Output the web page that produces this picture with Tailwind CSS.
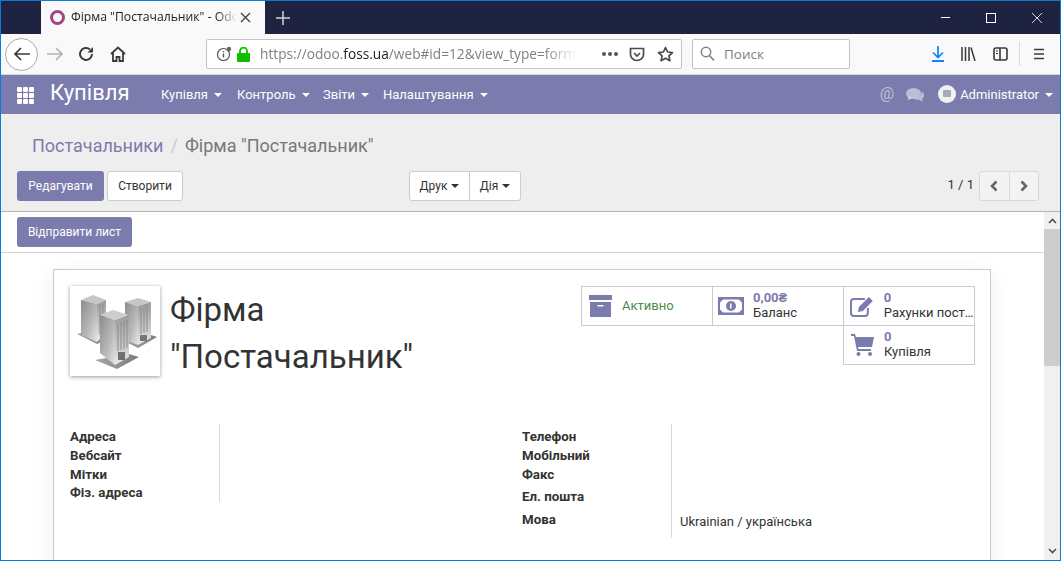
<!DOCTYPE html>
<html lang="uk">
<head>
<meta charset="UTF-8">
<title>Фірма "Постачальник" - Odoo</title>
<script src="https://cdn.jsdelivr.net/npm/@tailwindcss/browser@4"></script>
</head>
<body class="bg-white">
<div class="w-[1061px] h-[561px] overflow-hidden flex flex-col border border-[#0a7cd6] font-['Roboto',sans-serif] text-[13px] text-[#333333]">

  <!-- title bar -->
  <div class="h-[33px] shrink-0 bg-[#1e2342] flex items-stretch">
    <div class="w-[40px]"></div>
    <div class="w-[224px] bg-[#f9f9fa] flex items-center pl-[9px]">
      <span class="w-[15px] h-[15px] rounded-full border-[3px] border-[#a24689]"></span>
      <span class="ml-[6px] w-[166px] overflow-hidden whitespace-nowrap text-[12.2px] text-[#222222] font-['Open_Sans',sans-serif] [mask-image:linear-gradient(90deg,#000_88%,transparent)]">Фірма "Постачальник" - Odoo</span>
      <svg class="ml-[3px]" width="11" height="11" viewBox="0 0 11 11"><path d="M1 1l9 9M10 1l-9 9" stroke="#444" stroke-width="1.4"/></svg>
    </div>
    <div class="w-[36px] flex items-center justify-center">
      <svg width="14" height="14" viewBox="0 0 14 14"><path d="M7 0v14M0 7h14" stroke="#d0d2da" stroke-width="1.5"/></svg>
    </div>
    <div class="flex-1"></div>
    <div class="flex items-center">
      <div class="w-[46px] flex justify-center"><span class="w-[9px] h-px bg-white"></span></div>
      <div class="w-[46px] flex justify-center"><span class="w-[10px] h-[10px] border border-white"></span></div>
      <div class="w-[46px] flex justify-center"><svg width="10" height="10" viewBox="0 0 10 10"><path d="M0 0l10 10M10 0L0 10" stroke="#fff" stroke-width="0.8"/></svg></div>
    </div>
  </div>

  <!-- browser toolbar -->
  <div class="h-[41px] shrink-0 bg-[#f9f9fa] border-b border-[#d8d8da] flex items-center relative">
    <div class="ml-[4px] w-[33px] h-[33px] rounded-full border border-[#a8a8a8] bg-white flex items-center justify-center">
      <svg width="18" height="16" viewBox="0 0 18 16" fill="none"><path d="M17 8H2M8 2L2 8l6 6" stroke="#3a3a3a" stroke-width="1.7"/></svg>
    </div>
    <svg class="ml-[8px]" width="18" height="16" viewBox="0 0 18 16" fill="none"><path d="M1 8h15M10 2l6 6-6 6" stroke="#b4b4b4" stroke-width="1.7"/></svg>
    <svg class="ml-[14px]" width="16" height="16" viewBox="0 0 16 16" fill="none"><path d="M14 8a6 6 0 1 1-2-4.500" stroke="#3a3a3a" stroke-width="2"/><path d="M15 1v5.500h-5.500z" fill="#3a3a3a"/></svg>
    <svg class="ml-[16px]" width="16" height="16" viewBox="0 0 16 16" fill="none"><path d="M1 8l7-6.500L15 8M3 7v8h3.500v-4h3v4H13V7" stroke="#3a3a3a" stroke-width="1.800"/></svg>

    <div class="ml-[80px] w-[476px] h-[30px] bg-white border border-[#c4c4c6] rounded-[2px] flex items-center pl-[9px] text-[14px] text-[#7e7e7e] font-['Open_Sans',sans-serif]">
      <svg width="16" height="16" viewBox="0 0 16 16" fill="none"><circle cx="7.500" cy="8.500" r="6" stroke="#555" stroke-width="1.200"/><path d="M7.500 7.500v4M7.500 5v1.300" stroke="#555" stroke-width="1.400"/><circle cx="13" cy="3" r="2.200" fill="#666"/></svg>
      <svg class="ml-[5px]" width="13" height="15" viewBox="0 0 13 15"><rect x="0" y="6" width="13" height="9" rx="1" fill="#12bc00"/><path d="M3 7V4a3.500 3.500 0 0 1 7 0v3" fill="none" stroke="#12bc00" stroke-width="1.800"/></svg>
      <span class="ml-[10px] w-[316px] overflow-hidden whitespace-nowrap [mask-image:linear-gradient(90deg,#000_90%,transparent)] text-[13.7px]">https://odoo.<span class="text-[#222222]">foss.ua</span>/web#id=12&amp;view_type=form&amp;model=res.partner</span>
      <div class="ml-[26px] flex gap-[2px]"><span class="w-[4px] h-[4px] rounded-full bg-[#555]"></span><span class="w-[4px] h-[4px] rounded-full bg-[#555]"></span><span class="w-[4px] h-[4px] rounded-full bg-[#555]"></span></div>
      <svg class="ml-[11px]" width="16" height="15" viewBox="0 0 16 15" fill="none"><path d="M1.500 1.500h13v6a6.500 6 0 0 1-13 0z" stroke="#4a4a4a" stroke-width="1.700"/><path d="M5 6l3 3 3-3" stroke="#4a4a4a" stroke-width="1.700"/></svg>
      <svg class="ml-[12px]" width="17" height="16" viewBox="0 0 17 16" fill="none"><path d="M8.500 1.500l2.100 4.500 4.900.6-3.600 3.300 1 4.800-4.400-2.500-4.400 2.500 1-4.800L1.500 6.600l4.900-.6z" stroke="#4a4a4a" stroke-width="1.700" stroke-linejoin="round"/></svg>
    </div>

    <div class="ml-[10px] w-[158px] h-[30px] bg-white border border-[#c4c4c6] rounded-[2px] flex items-center pl-[7px] text-[13.500px] text-[#7e7e7e] font-['Open_Sans',sans-serif]">
      <svg width="15" height="16" viewBox="0 0 15 16" fill="none"><circle cx="6" cy="6" r="4.700" stroke="#808080" stroke-width="1.500"/><path d="M9.500 9.500l4.500 5" stroke="#808080" stroke-width="1.700"/></svg>
      <span class="ml-[9px]">Поиск</span>
    </div>

    <svg class="ml-[81px]" width="14" height="16" viewBox="0 0 14 16" fill="none"><path d="M7 0v11M2 6.500l5 5 5-5" stroke="#0a84ff" stroke-width="1.700"/><path d="M1 15h12" stroke="#0a84ff" stroke-width="2"/></svg>
    <svg class="ml-[16px]" width="15" height="14" viewBox="0 0 15 14" fill="none"><path d="M1 0v14M4.500 0v14M8 0v14M10 .5l4 13.500" stroke="#3a3a3a" stroke-width="1.500"/></svg>
    <svg class="ml-[17px]" width="15" height="14" viewBox="0 0 15 14" fill="none"><rect x="1" y="1" width="13" height="12" rx="2" stroke="#3a3a3a" stroke-width="1.600"/><path d="M7 1v12" stroke="#3a3a3a" stroke-width="1.600"/><path d="M3 4h2M3 6.500h2" stroke="#3a3a3a"/></svg>
    <span class="ml-[11px] w-px h-[24px] bg-[#dcdcdc]"></span>
    <svg class="ml-[13px]" width="12" height="12" viewBox="0 0 12 12"><path d="M1 1.500h10M1 6h10M1 10.500h10" stroke="#3a3a3a" stroke-width="1.600"/></svg>
  </div>

  <!-- odoo nav -->
  <div class="h-[39px] shrink-0 bg-[#7c7bad] flex items-center text-white pt-px">
    <div class="ml-[16px] grid grid-cols-3 gap-[1px] w-[17px]">
      <span class="h-[5px] bg-white rounded-[1px]"></span><span class="h-[5px] bg-white rounded-[1px]"></span><span class="h-[5px] bg-white rounded-[1px]"></span>
      <span class="h-[5px] bg-white rounded-[1px]"></span><span class="h-[5px] bg-white rounded-[1px]"></span><span class="h-[5px] bg-white rounded-[1px]"></span>
      <span class="h-[5px] bg-white rounded-[1px]"></span><span class="h-[5px] bg-white rounded-[1px]"></span><span class="h-[5px] bg-white rounded-[1px]"></span>
    </div>
    <span class="ml-[16px] text-[22px] leading-none -mt-[5px] w-[111px]">Купівля</span>
    <span class="flex items-center w-[76px]">Купівля<i class="ml-[6px] border-x-[4px] border-x-transparent border-t-[4px] border-t-white"></i></span>
    <span class="flex items-center w-[86px]">Контроль<i class="ml-[6px] border-x-[4px] border-x-transparent border-t-[4px] border-t-white"></i></span>
    <span class="flex items-center w-[60px]">Звіти<i class="ml-[6px] border-x-[4px] border-x-transparent border-t-[4px] border-t-white"></i></span>
    <span class="flex items-center">Налаштування<i class="ml-[6px] border-x-[4px] border-x-transparent border-t-[4px] border-t-white"></i></span>
    <span class="ml-auto text-[16px] leading-none text-white/50 -mt-[2px]">@</span>
    <svg class="ml-[12px]" width="18" height="15" viewBox="0 0 18 15"><ellipse cx="7.500" cy="5.500" rx="7.500" ry="5.500" fill="#fff" fill-opacity=".5"/><path d="M2.500 8.500L1.500 12.500l4.500-2.500z" fill="#fff" fill-opacity=".5"/><path d="M15.500 3.500c2 1 2.500 2.500 2.500 3.800 0 1.500-.8 2.800-2 3.600l.8 2.800-3.500-2c-2 .3-4-.2-5.300-1.200 4.500.2 8-2.500 7.500-7z" fill="#fff" fill-opacity=".5"/></svg>
    <span class="ml-[14px] w-[18px] h-[18px] rounded-full bg-[#f2f2f2] flex items-center justify-center -mt-[3px]"><span class="w-[8px] h-[7px] rounded-[1px] bg-[#a9a9bb]"></span></span>
    <span class="ml-[4px]">Administrator</span>
    <i class="ml-[6px] mr-[7px] border-x-[4px] border-x-transparent border-t-[4px] border-t-white"></i>
  </div>

  <!-- control panel -->
  <div class="h-[98px] shrink-0 bg-[#efeeef] border-b border-[#b5b5b5] pl-[16px] pr-[21px]">
    <div class="h-[57px] pl-[15px] pt-[20px] text-[18px] leading-[24px] whitespace-nowrap">
      <span class="text-[#7c7bad]">Постачальники</span><span class="text-[#c8c8c8] mx-[7px]">/</span><span class="text-[#777777]">Фірма "Постачальник"</span>
    </div>
    <div class="flex items-start text-[12px]">
      <button class="w-[87px] h-[30px] bg-[#7c7bad] text-white rounded-[3px]">Редагувати</button>
      <button class="ml-[3px] w-[76px] h-[30px] bg-white border border-[#cccccc] rounded-[3px]">Створити</button>
      <div class="ml-[226px] flex h-[30px] bg-white border border-[#cccccc] rounded-[3px]">
        <span class="w-[60px] flex items-center justify-center border-r border-[#cccccc]">Друк<i class="ml-[4px] border-x-[4px] border-x-transparent border-t-[4px] border-t-[#333333]"></i></span>
        <span class="w-[50px] flex items-center justify-center">Дія<i class="ml-[4px] border-x-[4px] border-x-transparent border-t-[4px] border-t-[#333333]"></i></span>
      </div>
      <span class="ml-auto h-[30px] leading-[28px] text-[13px]">1 / 1</span>
      <div class="ml-[5px] flex h-[30px] w-[60px] bg-[#f3f3f3] border border-[#d8d8d8] rounded-[3px]">
        <span class="flex-1 flex items-center justify-center border-r border-[#d8d8d8]"><svg width="8" height="12" viewBox="0 0 8 12" fill="none"><path d="M6.500 1.500L2 6l4.500 4.500" stroke="#666" stroke-width="2.600"/></svg></span>
        <span class="flex-1 flex items-center justify-center"><svg width="8" height="12" viewBox="0 0 8 12" fill="none"><path d="M1.500 1.500L6 6l-4.500 4.500" stroke="#666" stroke-width="2.600"/></svg></span>
      </div>
    </div>
  </div>

  <!-- content + scrollbar -->
  <div class="flex-1 min-h-0 flex">
    <div class="flex-1 min-w-0 overflow-hidden">
      <div class="h-[41px] border-b border-[#cfcfd4] pl-[16px] pt-[5px]">
        <button class="w-[115px] h-[30px] bg-[#7c7bad] text-white text-[12px] rounded-[3px]">Відправити лист</button>
      </div>
      <div class="ml-[52px] w-[938px] h-[400px] mt-[16px] bg-white border border-[#c9c9d1] shadow-[0_5px_20px_rgba(0,0,0,0.08)] pt-[16px] pl-[16px] pr-[15px]">
        <div class="flex items-start h-[138px]">
          <div class="w-[90px] h-[90px] shrink-0 bg-white shadow-[0_1px_4px_rgba(0,0,0,0.4)]">
            <svg width="90" height="90" viewBox="0 0 90 90">
              <defs>
                <linearGradient id="lface" x1="0" y1="0" x2="1" y2="1"><stop offset="0" stop-color="#8c8c8c"/><stop offset="0.6" stop-color="#b9b9b9"/><stop offset="1" stop-color="#e6e6e6"/></linearGradient>
                <linearGradient id="rface" x1="0" y1="0" x2="0" y2="1"><stop offset="0" stop-color="#9a9a9a"/><stop offset="0.7" stop-color="#cfcfcf"/><stop offset="1" stop-color="#ececec"/></linearGradient>
                <linearGradient id="floor" x1="0" x2="1"><stop offset="0" stop-color="#a8a8a8"/><stop offset="1" stop-color="#7c7c7c"/></linearGradient>
              </defs>
              <!-- left block -->
              <path d="M7 48l20 10 14-6-16-9z" fill="url(#floor)"/>
              <path d="M11 14l12-5 13 5-9 4z" fill="#c6c6c6"/>
              <path d="M11 14l16 4v38l-16-7z" fill="url(#lface)"/>
              <path d="M27 18l9-4v33l-9 9z" fill="url(#rface)"/>
              <path d="M30 19v30M33 18v28" stroke="#8d8d8d"/>
              <!-- right block -->
              <path d="M52 54l16 8 19-11-12-4z" fill="url(#floor)"/>
              <path d="M55 16l13-4 13 4-13 4z" fill="#c6c6c6"/>
              <path d="M55 16l13 4v39l-13-5z" fill="url(#lface)"/>
              <path d="M68 20l13-4v36l-13 7z" fill="url(#rface)"/>
              <path d="M71 21v27M74 20v27M77 19v27" stroke="#8d8d8d"/>
              <rect x="70" y="49" width="7" height="6" fill="#777"/>
              <!-- front block -->
              <path d="M25 74l22 9 22-12-10-3z" fill="url(#floor)"/>
              <path d="M30 29l13-5 16 5-14 5z" fill="#cdcdcd"/>
              <path d="M30 29l15 5v45l-15-12z" fill="url(#lface)"/>
              <path d="M45 34l14-5v42l-14 8z" fill="url(#rface)"/>
              <path d="M48 37v28M51 36v28M54 35v28M57 34v28" stroke="#8d8d8d"/>
              <rect x="48" y="66" width="7" height="8" fill="#6f6f6f"/>
            </svg>
          </div>
          <div class="ml-[10px] w-[260px] text-[33px] leading-[47px] text-[#333333] whitespace-nowrap">Фірма<br>"Постачальник"</div>
          <div class="ml-auto grid grid-cols-[132px_131px_131px] w-[394px] text-[13px] leading-[15px]">
            <div class="h-[40px] border border-[#c9c9d1] flex items-center">
              <svg class="ml-[7px]" width="23" height="22" viewBox="0 0 23 22" fill="#7c7bad"><rect width="23" height="5"/><path d="M1 7h21v15H1zM8.500 10v1.500h6V10z" fill-rule="evenodd"/></svg>
              <span class="ml-[10px] -mt-[2px] text-[#4d8a4e]">Активно</span>
            </div>
            <div class="h-[40px] border-y border-r border-[#c9c9d1] flex items-center">
              <svg class="ml-[5px]" width="26" height="18" viewBox="0 0 26 18"><rect width="26" height="18" fill="#7c7bad"/><path d="M5 2.500h16l3 3v7l-3 3H5l-3-3v-7z" fill="#fff"/><circle cx="13" cy="9" r="5" fill="#7c7bad"/><path d="M12 6.500h1.500v5H12z" fill="#fff"/></svg>
              <div class="ml-[9px] -mt-[3px]"><div class="font-bold text-[#7c7bad]">0,00₴</div><div>Баланс</div></div>
            </div>
            <div class="h-[40px] border-y border-r border-[#c9c9d1] flex items-center">
              <svg class="ml-[6px]" width="25" height="21" viewBox="0 0 25 21" fill="none"><path d="M15 3H4a3 3 0 0 0-3 3v11a3 3 0 0 0 3 3h11a3 3 0 0 0 3-3v-5" stroke="#7c7bad" stroke-width="2"/><path d="M8 16l1-5L19 1l4 4-10 10z" fill="#7c7bad"/></svg>
              <div class="ml-[9px] -mt-[3px] min-w-0"><div class="font-bold text-[#7c7bad]">0</div><div class="whitespace-nowrap overflow-hidden text-ellipsis w-[91px]">Рахунки постачальника</div></div>
            </div>
            <div class="col-start-3 -ml-px h-[39px] border-x border-b border-[#c9c9d1] flex items-center">
              <svg class="ml-[7px]" width="23" height="22" viewBox="0 0 23 22" fill="#7c7bad"><path d="M0 0h4l1 3h18l-2 10H7l.5 2H20v2H6L3 2H0z"/><circle cx="7.500" cy="20" r="2"/><circle cx="19" cy="20" r="2"/></svg>
              <div class="ml-[10px] -mt-[3px]"><div class="font-bold text-[#7c7bad]">0</div><div>Купівля</div></div>
            </div>
          </div>
        </div>

        <div class="flex items-start">
          <div class="w-[150px] h-[78px] border-r border-[#d9d9d9] font-bold pt-[3px] leading-[19px] text-[13.3px]">
            <div>Адреса</div><div>Вебсайт</div><div>Мітки</div><div class="leading-[18px]">Фіз. адреса</div>
          </div>
          <div class="ml-[302px] w-[150px] h-[114px] border-r border-[#d9d9d9] font-bold pt-[3px] leading-[19px] text-[13.3px]">
            <div>Телефон</div><div>Мобільний</div><div>Факс</div><div class="mt-[3px]">Ел. пошта</div><div class="mt-[4px]">Мова</div>
          </div>
          <div class="ml-[8px] pt-[88px] leading-[19px]">Ukrainian / українська</div>
        </div>
      </div>
    </div>
    <div class="w-[16px] shrink-0 bg-[#f0f0f0] flex flex-col items-center">
      <svg class="mt-[6px]" width="9" height="6" viewBox="0 0 9 6" fill="none"><path d="M1 5l3.500-3.500L8 5" stroke="#505050" stroke-width="1.600"/></svg>
      <div class="mt-[5px] w-full h-[137px] bg-[#cdcdcd]"></div>
      <svg class="mt-auto mb-[6px]" width="9" height="6" viewBox="0 0 9 6" fill="none"><path d="M1 1l3.500 3.500L8 1" stroke="#505050" stroke-width="1.600"/></svg>
    </div>
  </div>
</div>
</body>
</html>
